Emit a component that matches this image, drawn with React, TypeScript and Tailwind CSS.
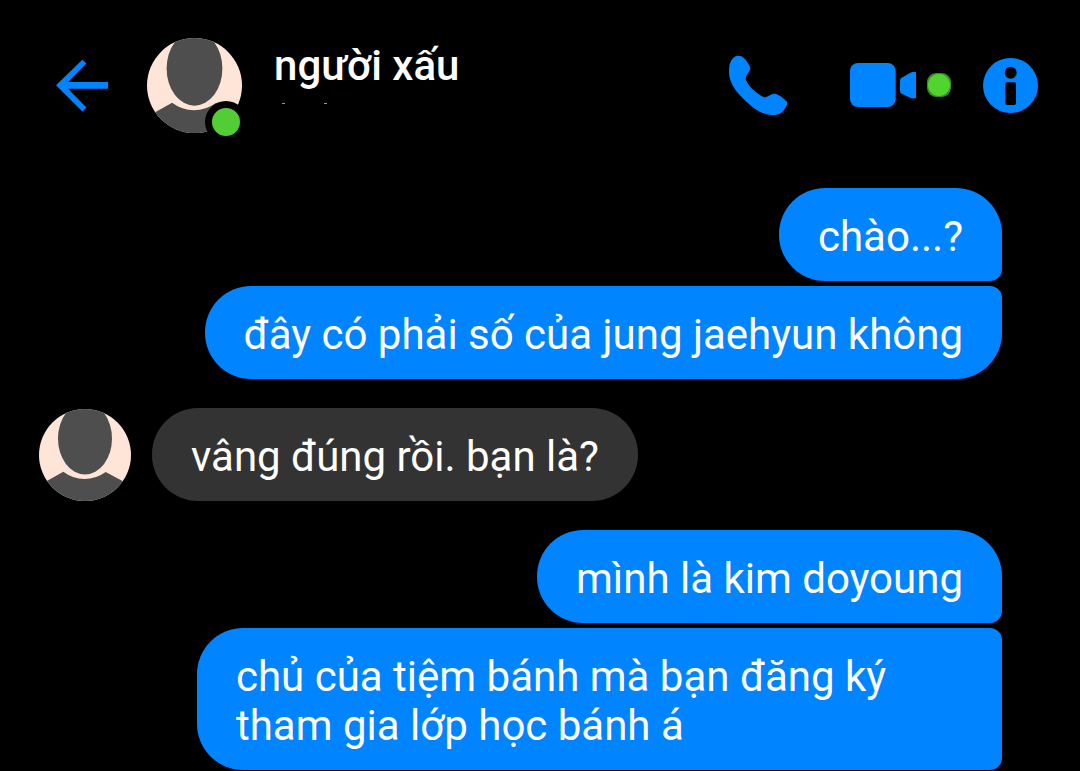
import clsx from "clsx";

interface Group {
    from: "me" | "them";
    messages: string[];
}

const conversation: Group[] = [
    {
        from: "me",
        messages: ["chào...?", "đây có phải số của jung jaehyun không"],
    },
    { from: "them", messages: ["vâng đúng rồi. bạn là?"] },
    {
        from: "me",
        messages: [
            "mình là kim doyoung",
            "chủ của tiệm bánh mà bạn đăng ký tham gia lớp học bánh á",
        ],
    },
];

function Avatar({ className }: { className: string }) {
    return (
        <svg
            viewBox="0 0 92 92"
            className={clsx("block rounded-full bg-[#ffe4d8]", className)}
            fill="#4e4e4e"
            aria-hidden="true"
        >
            <ellipse cx="46" cy="29.5" rx="27" ry="36" />
            <path d="M0 76 L8.3 71.7 L24.3 62.7 Q34 70 45.5 70 Q57 70 66.7 63 L83 71.7 L92 76 V92 H0Z" />
        </svg>
    );
}

function BackIcon() {
    return (
        <svg viewBox="0 0 52 52" className="w-[52px] h-[52px]" fill="currentColor">
            <path d="M0 25.3 L26.4 -0.3 L30.4 3.5 L12 22 H52 V28.8 H12 L30.4 47.6 L26.4 51.4Z" />
        </svg>
    );
}

function PhoneIcon() {
    return (
        <svg viewBox="54 45 180 183" className="w-[60px] h-[61px]" fill="currentColor">
            <path d="M85 47C98 47 106 57 113 68C119 77 123 84 120 90C116 99 108 104 107 115C107 130 133 157 160 171C170 175 182 160 195 161C204 162 222 175 229 184C233 189 232 193 229 199C220 214 211 225 195 225C160 225 140 213 110 186C75 155 57 125 57 97C57 75 60 65 69 55C74 49 79 47 85 47Z" />
        </svg>
    );
}

function VideoIcon() {
    return (
        <svg viewBox="45 69 201 135" className="w-[67px] h-[45px]" fill="currentColor">
            <rect x="45" y="69" width="137" height="132" rx="24" />
            <path d="M195 121Q195 115 200 113L226 98Q229 96 233 96H243V175H233Q229 175 226 173L200 161Q195 159 195 153Z" />
        </svg>
    );
}

function ActiveDot() {
    return (
        <svg viewBox="0 0 24 25" className="w-6 h-[25px]">
            <rect width="24" height="24" rx="9" fill="#3c8a2c" />
            <circle cx="12" cy="12" r="11" fill="#52d42f" />
        </svg>
    );
}

function InfoIcon() {
    return (
        <svg viewBox="444 54 165 165" className="w-[55px] h-[55px]">
            <circle cx="526.5" cy="136.5" r="82.5" fill="currentColor" />
            <circle cx="527" cy="98" r="18" fill="#000" />
            <rect x="511" y="127" width="32" height="68" rx="5" fill="#000" />
        </svg>
    );
}

function Header() {
    return (
        <header className="flex items-center pl-14 pr-[42px] pt-[38px]">
            <button aria-label="Back" className="shrink-0 text-[#0084ff]">
                <BackIcon />
            </button>
            <div className="relative ml-[39px] shrink-0">
                <Avatar className="w-[95px] h-[95px]" />
                <span className="absolute -right-[5px] -bottom-[10px] w-[42px] h-[42px] rounded-full border-[7px] border-black bg-[#52cd33]" />
            </div>
            <div className="ml-8 flex-1 self-start">
                <h1 className="text-[42px] leading-[56px] font-medium">người xấu</h1>
                {/* status line, almost entirely hidden */}
                <svg viewBox="0 0 56 12" className="w-14 h-3" fill="#999" aria-hidden="true">
                    <rect x="8" y="9" width="3" height="1" />
                    <rect x="50" y="9" width="3" height="1" />
                </svg>
            </div>
            <div className="flex shrink-0 items-center text-[#0084ff]">
                <button aria-label="Call">
                    <PhoneIcon />
                </button>
                <button aria-label="Video call" className="ml-[62px] flex items-center gap-[10px]">
                    <VideoIcon />
                    <ActiveDot />
                </button>
                <button aria-label="Info" className="ml-8">
                    <InfoIcon />
                </button>
            </div>
        </header>
    );
}

function MessageGroup({ group }: { group: Group }) {
    const mine = group.from === "me";
    const last = group.messages.length - 1;

    return (
        <li className={clsx("flex", mine ? "justify-end" : "items-end gap-[21px]")}>
            {!mine && <Avatar className="w-[92px] h-[92px] shrink-0" />}
            <div className={clsx("flex flex-col gap-[5px]", mine ? "items-end" : "items-start")}>
                {group.messages.map((text, i) => (
                    <p
                        key={text}
                        className={clsx(
                            "max-w-[805px] rounded-[46px] px-[39px] pt-6 pb-5",
                            mine ? "bg-[#0084ff]" : "bg-[#333333]",
                            mine && i > 0 && "rounded-tr-[12px]",
                            mine && (i < last || text.length > 40) && "rounded-br-[12px]"
                        )}
                    >
                        {text}
                    </p>
                ))}
            </div>
        </li>
    );
}

export default function App() {
    return (
        <div className="min-h-screen bg-black text-white font-['Roboto',sans-serif]">
            <Header />
            <main className="pt-[55px] pl-[39px] pr-[78px]">
                <ul className="flex flex-col gap-[29px] text-[42px] leading-[49px]">
                    {conversation.map((group, i) => (
                        <MessageGroup key={i} group={group} />
                    ))}
                </ul>
            </main>
        </div>
    );
}
